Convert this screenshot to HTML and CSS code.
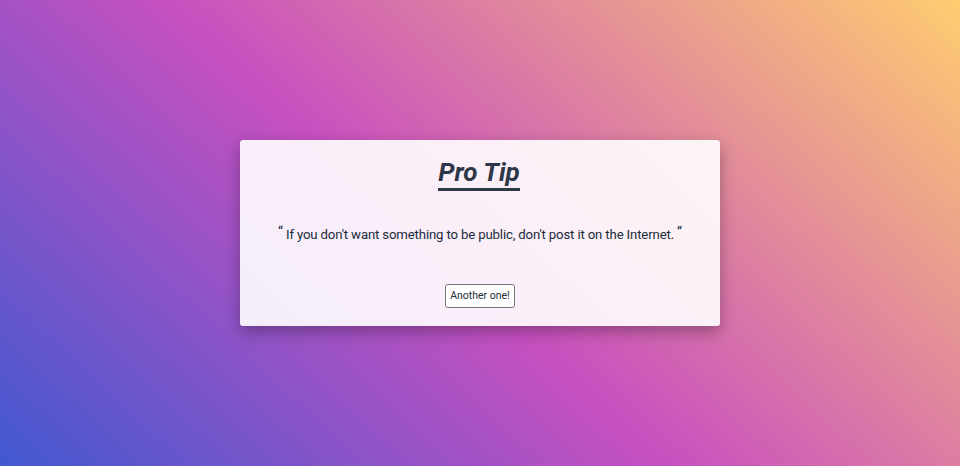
FILE: index.html
```html
<!DOCTYPE html>
<html>
<head>
<meta charset="utf-8">
<link rel="stylesheet" href="styles.css">
</head>
<body>
<div class="card">
  <h1 class="title">Pro Tip</h1>
  <p class="quote"><span class="mark">“</span> If you don't want something to be public, don't post it on the Internet. <span class="mark">”</span></p>
  <button class="btn">Another one!</button>
</div>
</body>
</html>
```
FILE: styles.css
```css
html, body {
  margin: 0;
  height: 100%;
}
body {
  font-family: Roboto, "Liberation Sans", sans-serif;
  background: linear-gradient(43deg, #4158D0 0%, #C850C0 46%, #FFCC70 100%);
  display: flex;
  align-items: center;
  justify-content: center;
  color: #2d3748;
}
.card {
  width: 480px;
  height: 186px;
  box-sizing: border-box;
  background: rgba(255, 255, 255, 0.9);
  border-radius: 3px;
  box-shadow: 0 6px 16px rgba(0, 0, 0, 0.3);
  display: flex;
  flex-direction: column;
  align-items: center;
  padding-top: 19px;
}
.title {
  margin: 0 2px 0 0;
  font-size: 26px;
  font-style: italic;
  font-weight: 700;
  line-height: 26px;
  padding: 0 0 3px 0;
  border-bottom: 3px solid #2d3748;
}
.quote {
  margin: 32px 0 0;
  font-size: 13.2px;
  font-weight: 400;
  line-height: 18px;
  letter-spacing: -0.15px;
  color: #222b3c;
}
.mark {
  font-size: 14px;
  vertical-align: 2px;
}
.btn {
  margin-top: 40px;
  font-family: Roboto, "Liberation Sans", sans-serif;
  font-size: 10.5px;
  font-weight: 400;
  color: #222b3c;
  background: #fff;
  border: 1px solid #777;
  border-radius: 3px;
  padding: 5px 4px;
  line-height: 12px;
}
```
